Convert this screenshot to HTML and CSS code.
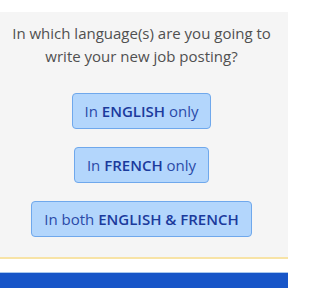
FILE: index.html
```html
<!DOCTYPE html>
<html>
<head>
<meta charset="utf-8">
<link rel="stylesheet" href="styles.css">
</head>
<body>
<div class="top"></div>
<main class="panel">
  <p class="question">In which language(s) are you going to write your new job posting?</p>
  <div class="choices">
    <button class="choice">In <b>ENGLISH</b> only</button>
    <button class="choice">In <b>FRENCH</b> only</button>
    <button class="choice">In both <b>ENGLISH &amp; FRENCH</b></button>
  </div>
</main>
<div class="rule"></div>
<div class="gap"></div>
<footer class="bar"></footer>
</body>
</html>
```
FILE: styles.css
```css
html, body { margin: 0; padding: 0; }
html { background: #ffffff; }
body {
  width: 288px;
  height: 288px;
  overflow: hidden;
  background: #ffffff;
  font-family: "Open Sans", "Noto Sans", sans-serif;
}
.top { height: 12px; background: #ffffff; }
.panel {
  height: 245px;
  background: #f5f5f5;
  box-sizing: border-box;
  padding: 10px 5px 0 0;
}
.question {
  margin: 0;
  text-align: center;
  font-size: 15px;
  line-height: 23px;
  color: #505050;
  padding: 0 8px;
}
.choices {
  display: flex;
  flex-direction: column;
  align-items: center;
  gap: 18px;
  margin-top: 25px;
}
.choice {
  font-family: inherit;
  font-size: 15px;
  line-height: 22px;
  color: #2a4aa8;
  background: #b3d6fc;
  border: 1px solid #6fa8ec;
  border-radius: 4px;
  padding: 6px 12px;
  height: 36px;
  box-sizing: border-box;
}
.choice b { font-weight: 600; color: #1b3a9c; }
.rule { height: 2px; background: #f7e3a6; }
.gap { height: 13px; background: #ffffff; }
.bar { height: 16px; background: #1755c8; border-top: 1px solid #a9c8ee; }
```
